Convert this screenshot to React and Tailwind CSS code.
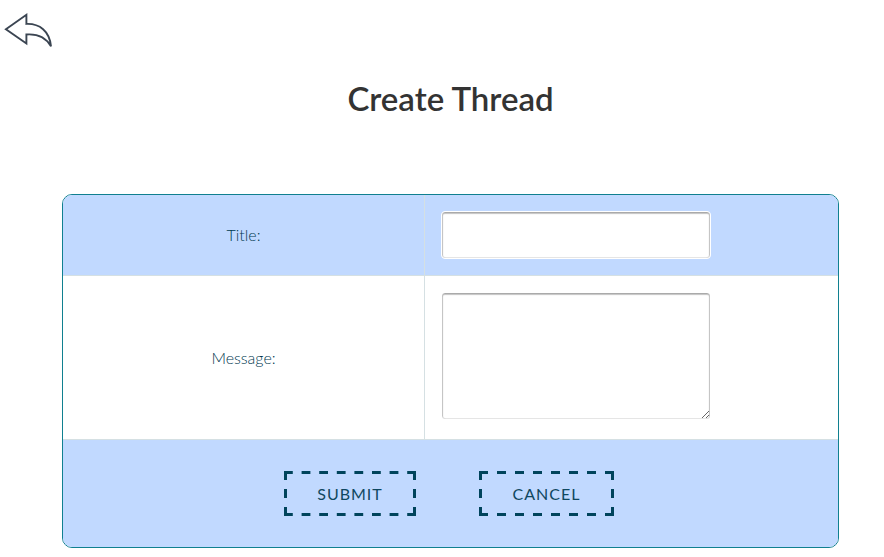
function BackArrow() {
  return (
    <svg className="block h-[37px] w-[50px]" viewBox="0 0 50 37" fill="none" stroke="#3b4552" strokeWidth="1.9">
      <path d="M2.9 17.2 L23.4 2.8 V11.9 C36.5 11.4 46.6 19 48 34.4 C43 25.6 35.5 21.6 23.4 22.5 V31.5 Z" />
    </svg>
  );
}

function Label({ children }) {
  return (
    <div className="flex w-[362px] items-center justify-center border-r border-[#d5e0e3] text-[16px] font-light text-[#00394f]">
      {children}
    </div>
  );
}

// Dashes and gaps share one length, so every corner falls on a dash.
function DashedButton({ width, children }) {
  const dash = width / 15;
  return (
    <button
      type="button"
      className="relative h-[45px] text-[16px] leading-none tracking-[1px] text-[#0f4760]"
      style={{ width }}
    >
      <svg className="absolute inset-0 h-full w-full" fill="none" stroke="#00445c" strokeWidth="3" aria-hidden="true">
        <path d={`M0 1.5H${width}M0 43.5H${width}`} strokeDasharray={dash} />
        <path d={`M1.5 0V45M${width - 1.5} 0V45`} strokeDasharray="9" />
      </svg>
      {children}
    </button>
  );
}

const fieldClass =
  "block w-[270px] rounded-[4px] border border-white bg-white px-2 shadow-[inset_0_1px_0_#aaaaaa,inset_0_2px_1px_#c4c4c4,inset_1px_0_1px_#c0c0c0,inset_-1px_0_1px_#c0c0c0,inset_0_-1px_0_#eeeeee] outline-none";

export default function App() {
  return (
    <div className="h-[557px] w-[884px] overflow-hidden bg-white font-['Lato',sans-serif]">
      <header className="h-[77px] pt-[12px] pl-[3px]">
        <a href="#" aria-label="Back" className="inline-block">
          <BackArrow />
        </a>
      </header>
      <h1 className="ml-[62px] h-[117px] w-[777px] text-center text-[33px] leading-[42px] font-semibold text-[#333333]">
        Create Thread
      </h1>
      <form className="ml-[62px] flex h-[354px] w-[777px] flex-col overflow-hidden rounded-[10px] border border-[#108090] bg-white">
        <div className="flex h-[81px] border-b border-[#d5e0e3] bg-[#c1d9ff]">
          <Label>Title:</Label>
          <div className="pt-[16px] pl-[16px]">
            <input aria-label="Title" className={fieldClass + " h-[48px]"} />
          </div>
        </div>
        <div className="flex h-[164px] border-b border-[#d5e0e3] bg-white">
          <Label>Message:</Label>
          <div className="pt-[16px] pl-[16px]">
            <textarea aria-label="Message" className={fieldClass + " h-[128px] resize"} />
          </div>
        </div>
        <div className="flex flex-1 gap-[63px] bg-[#c1d9ff] pt-[31px] pl-[221px]">
          <DashedButton width={132}>SUBMIT</DashedButton>
          <DashedButton width={135}>CANCEL</DashedButton>
        </div>
      </form>
    </div>
  );
}
